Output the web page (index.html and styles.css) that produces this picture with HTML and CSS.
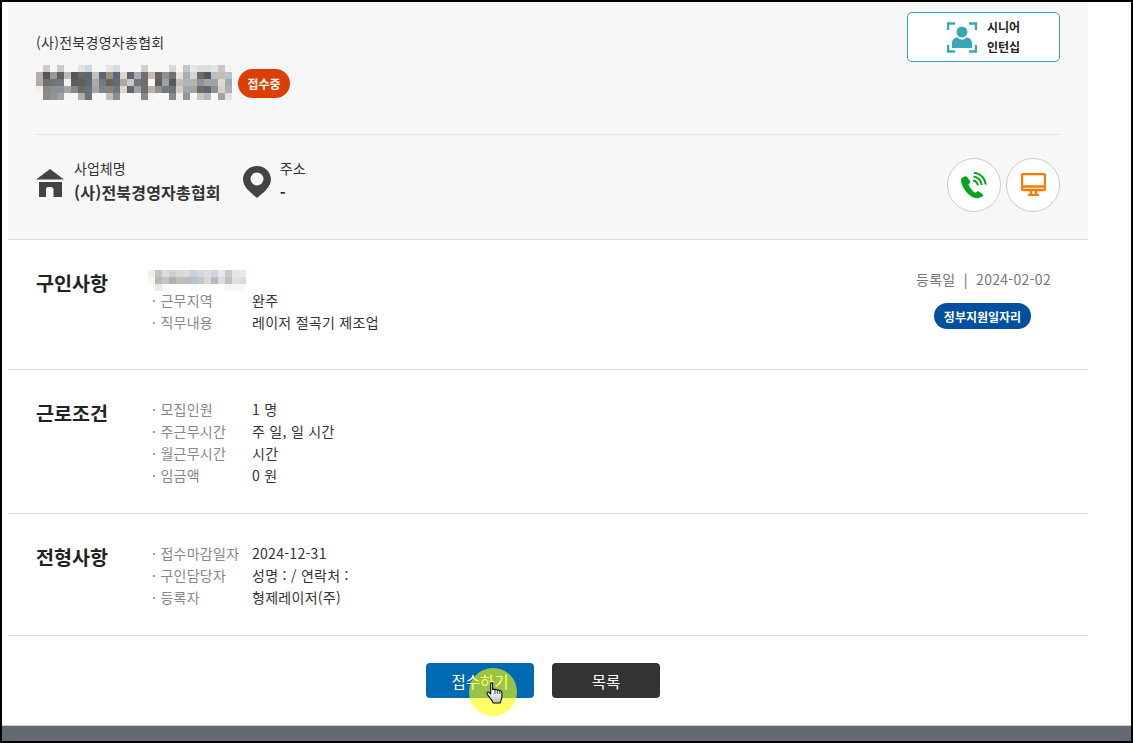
FILE: index.html
```html
<!DOCTYPE html>
<html lang="ko">
<head>
<meta charset="utf-8">
<title>구인 상세</title>
<link rel="stylesheet" href="styles.css">
</head>
<body>
<div class="frame">
  <main class="main">
    <header class="summary">
      <div class="summary-top">
        <div class="org-block">
          <p class="org">(사)전북경영자총협회</p>
          <div class="title-row">
            <svg class="mosaic mosaic-title" viewBox="0 0 196 38" aria-hidden="true">
              <g>
                <rect x="7" y="0" fill="#ccc"/><rect x="21" y="0" fill="#ccc"/><rect x="42" y="0" fill="#e5e5e5"/><rect x="49" y="0" fill="#d4d6d8"/><rect x="70" y="0" fill="#e5e5e5"/><rect x="77" y="0" fill="#d8dadb"/><rect x="105" y="0" fill="#d0d0d0"/><rect x="133" y="0" fill="#d8d8d8"/><rect x="147" y="0" fill="#c4c4c4"/><rect x="154" y="0" fill="#e8e8e8"/><rect x="161" y="0" fill="#ddd"/><rect x="168" y="0" fill="#ddd"/><rect x="175" y="0" fill="#e4e4e8"/><rect x="182" y="0" fill="#c8c8c8"/><rect x="189" y="0" fill="#f2f3f5"/>
                <rect x="0" y="7" fill="#b5aea7"/><rect x="7" y="7" fill="#555"/><rect x="14" y="7" fill="#95979b"/><rect x="21" y="7" fill="#5c6167"/><rect x="28" y="7" fill="#bdb9b3"/><rect x="35" y="7" fill="#55585a"/><rect x="42" y="7" fill="#6b6660"/><rect x="49" y="7" fill="#5b6773"/><rect x="56" y="7" fill="#c4bfba"/><rect x="63" y="7" fill="#5b6976"/><rect x="70" y="7" fill="#9a9085"/><rect x="77" y="7" fill="#5c6873"/><rect x="84" y="7" fill="#dcd6d0"/><rect x="91" y="7" fill="#666"/><rect x="98" y="7" fill="#a5adb5"/><rect x="105" y="7" fill="#6e6e6e"/><rect x="112" y="7" fill="#c5bdb5"/><rect x="119" y="7" fill="#6b655f"/><rect x="126" y="7" fill="#8b929b"/><rect x="133" y="7" fill="#6f7072"/><rect x="140" y="7" fill="#e6e0d8"/><rect x="147" y="7" fill="#a5adb5"/><rect x="154" y="7" fill="#d8d4d0"/><rect x="161" y="7" fill="#6f6a62"/><rect x="168" y="7" fill="#505860"/><rect x="175" y="7" fill="#c0bfbe"/><rect x="182" y="7" fill="#c9bdb2"/><rect x="189" y="7" fill="#b8c2cc"/>
                <rect x="0" y="14" fill="#b5aca4"/><rect x="7" y="14" fill="#70706f"/><rect x="14" y="14" fill="#6f7476"/><rect x="21" y="14" fill="#73787e"/><rect x="28" y="14" fill="#f4f1ec"/><rect x="35" y="14" fill="#5a5e60"/><rect x="42" y="14" fill="#665d52"/><rect x="49" y="14" fill="#5e6a75"/><rect x="56" y="14" fill="#aea9a2"/><rect x="63" y="14" fill="#6d7c88"/><rect x="70" y="14" fill="#6a6054"/><rect x="77" y="14" fill="#606c76"/><rect x="84" y="14" fill="#b0a99f"/><rect x="91" y="14" fill="#c0c8ce"/><rect x="98" y="14" fill="#6f7478"/><rect x="105" y="14" fill="#6e6e6e"/><rect x="112" y="14" fill="#fafafa"/><rect x="119" y="14" fill="#665c52"/><rect x="126" y="14" fill="#9ba2a8"/><rect x="133" y="14" fill="#505a60"/><rect x="140" y="14" fill="#c8bcb2"/><rect x="147" y="14" fill="#a8b4be"/><rect x="154" y="14" fill="#b9b2aa"/><rect x="161" y="14" fill="#8d9298"/><rect x="168" y="14" fill="#a8a29a"/><rect x="175" y="14" fill="#a0a3a5"/><rect x="182" y="14" fill="#e2d8cc"/><rect x="189" y="14" fill="#a0a8b2"/>
                <rect x="0" y="21" fill="#f2f1ef"/><rect x="7" y="21" fill="#8b8781"/><rect x="14" y="21" fill="#8d8e8d"/><rect x="21" y="21" fill="#8a9096"/><rect x="28" y="21" fill="#aaa59f"/><rect x="35" y="21" fill="#84878a"/><rect x="42" y="21" fill="#6b6a64"/><rect x="49" y="21" fill="#66727d"/><rect x="56" y="21" fill="#a9a49d"/><rect x="63" y="21" fill="#7c8286"/><rect x="70" y="21" fill="#85827b"/><rect x="77" y="21" fill="#70767b"/><rect x="84" y="21" fill="#dcd8d0"/><rect x="91" y="21" fill="#666"/><rect x="98" y="21" fill="#9aa3ab"/><rect x="105" y="21" fill="#6e6e6e"/><rect x="112" y="21" fill="#bcb3a8"/><rect x="119" y="21" fill="#8f9498"/><rect x="126" y="21" fill="#6f7a82"/><rect x="133" y="21" fill="#6f7376"/><rect x="140" y="21" fill="#d6ccc2"/><rect x="147" y="21" fill="#a0a8b0"/><rect x="154" y="21" fill="#a8a39c"/><rect x="161" y="21" fill="#6f6c68"/><rect x="168" y="21" fill="#5f6870"/><rect x="175" y="21" fill="#8a9098"/><rect x="182" y="21" fill="#d8cfc6"/><rect x="189" y="21" fill="#a8b0bc"/>
                <rect x="7" y="28" fill="#8d8a85"/><rect x="14" y="28" fill="#939393"/><rect x="21" y="28" fill="#9ea2a5"/><rect x="28" y="28" fill="#f3f3f3"/><rect x="42" y="28" fill="#b5aea6"/><rect x="49" y="28" fill="#66727d"/><rect x="70" y="28" fill="#c4c0b8"/><rect x="77" y="28" fill="#8a9096"/><rect x="105" y="28" fill="#888"/><rect x="112" y="28" fill="#f3f3f3"/><rect x="133" y="28" fill="#888"/><rect x="140" y="28" fill="#f0f0f0"/><rect x="147" y="28" fill="#9298a0"/><rect x="161" y="28" fill="#cfc4bf"/><rect x="168" y="28" fill="#b0b6c4"/><rect x="182" y="28" fill="#a8a098"/><rect x="189" y="28" fill="#dde4ea"/>
              </g>
            </svg>
            <span class="badge badge-open">접수중</span>
          </div>
        </div>
        <a class="senior-btn" href="#">
          <svg class="senior-icon" viewBox="0 0 30 31" aria-hidden="true">
            <path class="bracket" d="M1 8V1.500H8M22 1.500H29V8M1 23V29.500H8M22 29.500H29V23"/>
            <circle class="person" cx="15" cy="10" r="5.500"/>
            <path class="person" d="M5 26V21C5 17.500 8 15.500 10.500 15.500C12 17 13.500 17.500 15 17.500C16.500 17.500 18 17 19.500 15.500C22 15.500 25 17.500 25 21V26Z"/>
          </svg>
          <span class="senior-text">시니어<br>인턴십</span>
        </a>
      </div>
      <div class="summary-bottom">
        <div class="info">
          <svg class="home-icon" viewBox="0 0 28 28" aria-hidden="true">
            <path class="dark-fill" fill-rule="evenodd" d="M14 0L28 10.500H0ZM3 13H26V28H17.500V20.500C17.500 18.500 16 18 13.500 18C11 18 10 18.500 10 20.500V28H3Z"/>
          </svg>
          <div class="info-text">
            <span class="info-label">사업체명</span>
            <strong class="info-value">(사)전북경영자총협회</strong>
          </div>
        </div>
        <div class="info">
          <svg class="pin-icon" viewBox="0 0 28 32" aria-hidden="true">
            <path class="dark-fill" fill-rule="evenodd" d="M14 0C6.300 0 0 6 0 13.500C0 21 8 27 14 32C20 27 28 21 28 13.500C28 6 21.700 0 14 0ZM14 6.500A6.500 6.500 0 1 1 14 19.500A6.500 6.500 0 1 1 14 6.500Z"/>
          </svg>
          <div class="info-text">
            <span class="info-label">주소</span>
            <strong class="info-value">-</strong>
          </div>
        </div>
        <div class="round-btns">
          <a class="round-btn" href="#">
            <svg class="phone-icon" viewBox="0 0 28 27" aria-hidden="true">
              <path class="phone-body" d="M4.500 4.500L1.500 6C0.500 8 1 11 3 15C6 20.500 11 25 15 26C17.500 26.500 20 26 21.500 25L23 24C23.500 23.500 23.500 23 23 22.500L18.800 19.500C18.300 19.200 17.800 19.200 17.300 19.500L15.500 20.800C13 19.500 9.500 15.500 8.500 12.500L10 10.800C10.400 10.300 10.500 9.800 10.200 9.300L7 4.800C6.500 4 5.500 4 4.500 4.500Z"/>
              <path class="phone-wave" d="M13 8.500C15.500 8.800 17.500 10.800 17.800 13.500M13.500 4.500C17.800 5 21.300 8.500 21.800 13M14 0.800C20 1.200 25 6 25.800 12.500"/>
            </svg>
          </a>
          <a class="round-btn" href="#">
            <svg class="monitor-icon" viewBox="0 0 25 23" aria-hidden="true">
              <path class="monitor-line" d="M2.500 1H22.500C23.300 1 24 1.700 24 2.500V15.500C24 16.300 23.300 17 22.500 17H2.500C1.700 17 1 16.300 1 15.500V2.500C1 1.700 1.700 1 2.500 1ZM1 13.500H24M10 17.500V21.500M15 17.500V21.500M7 22H18"/>
            </svg>
          </a>
        </div>
      </div>
    </header>

    <section class="section section-job">
      <h2 class="section-title">구인사항</h2>
      <div class="section-body">
        <svg class="mosaic mosaic-sub" viewBox="0 0 98 21" aria-hidden="true">
          <g>
            <rect x="0" y="0" fill="#f5eee8"/><rect x="7" y="0" fill="#c0c4c8"/><rect x="14" y="0" fill="#dcdcdc"/><rect x="21" y="0" fill="#d0d0d0"/><rect x="28" y="0" fill="#d8d8d8"/><rect x="35" y="0" fill="#e0dcd8"/><rect x="42" y="0" fill="#c8d0dc"/><rect x="49" y="0" fill="#d4d8e0"/><rect x="56" y="0" fill="#e0dcdc"/><rect x="63" y="0" fill="#d4d4e0"/><rect x="70" y="0" fill="#e4e8e8"/><rect x="77" y="0" fill="#c8c8c4"/><rect x="84" y="0" fill="#e8e4e0"/><rect x="91" y="0" fill="#e4e8f0"/>
            <rect x="0" y="7" fill="#f8f4f0"/><rect x="7" y="7" fill="#b8bab8"/><rect x="14" y="7" fill="#c4c4c4"/><rect x="21" y="7" fill="#b0b0b8"/><rect x="28" y="7" fill="#c0c0b8"/><rect x="35" y="7" fill="#c0bcb4"/><rect x="42" y="7" fill="#b8c0d0"/><rect x="49" y="7" fill="#c0c8d4"/><rect x="56" y="7" fill="#dcd8d4"/><rect x="63" y="7" fill="#b8b8c8"/><rect x="70" y="7" fill="#dcdcdc"/><rect x="77" y="7" fill="#c0c0bc"/><rect x="84" y="7" fill="#e4e0dc"/><rect x="91" y="7" fill="#d8dce0"/>
            <rect x="7" y="14" fill="#e8e8e6"/><rect x="14" y="14" fill="#fafafa"/><rect x="42" y="14" fill="#fafafa"/><rect x="77" y="14" fill="#f6f6f4"/><rect x="84" y="14" fill="#f8f6f4"/><rect x="91" y="14" fill="#f6f8fa"/>
          </g>
        </svg>
        <dl class="rows">
          <div class="row"><dt>· 근무지역</dt><dd>완주</dd></div>
          <div class="row"><dt>· 직무내용</dt><dd>레이저 절곡기 제조업</dd></div>
        </dl>
      </div>
      <div class="job-meta">
        <p class="reg-date">등록일 <span class="sep">|</span> 2024-02-02</p>
        <span class="badge badge-gov">정부지원일자리</span>
      </div>
    </section>

    <section class="section section-work">
      <h2 class="section-title">근로조건</h2>
      <div class="section-body">
        <dl class="rows">
          <div class="row"><dt>· 모집인원</dt><dd>1 명</dd></div>
          <div class="row"><dt>· 주근무시간</dt><dd>주 일, 일 시간</dd></div>
          <div class="row"><dt>· 월근무시간</dt><dd>시간</dd></div>
          <div class="row"><dt>· 임금액</dt><dd>0 원</dd></div>
        </dl>
      </div>
    </section>

    <section class="section section-screen">
      <h2 class="section-title">전형사항</h2>
      <div class="section-body">
        <dl class="rows">
          <div class="row"><dt>· 접수마감일자</dt><dd>2024-12-31</dd></div>
          <div class="row"><dt>· 구인담당자</dt><dd>성명 : / 연락처 :</dd></div>
          <div class="row"><dt>· 등록자</dt><dd>형제레이저(주)</dd></div>
        </dl>
      </div>
    </section>

    <div class="actions">
      <a class="btn btn-apply" href="#">접수하기</a>
      <a class="btn btn-list" href="#">목록</a>
    </div>
  </main>
  <div class="footer-bar"></div>

  <div class="cursor-halo"></div>
  <svg class="cursor-hand" viewBox="0 0 18 23" aria-hidden="true">
    <defs>
      <linearGradient id="handShade" x1="0" y1="0" x2="0" y2="1">
        <stop offset="0.4" stop-color="#fff"/>
        <stop offset="1" stop-color="#bbb"/>
      </linearGradient>
    </defs>
    <path fill="url(#handShade)" stroke="#000" stroke-width="1.100" stroke-linejoin="round" d="M5 1.500C5 0.500 7 0.500 7 1.500V8C7.500 7 9.500 7 9.500 8.300C10 7.300 12 7.500 12 8.800C12.500 8 14.500 8.300 14.500 9.500C15 9 16.800 9.300 16.800 10.800V15.500C16.800 18 15.500 19.500 15 22H7.500C7 20 5.500 18.500 4 16.500C3 15 1 13 1 11.800C1 10.500 2.500 10.200 3.500 11L5 12.500Z"/>
    <path fill="none" stroke="#000" stroke-width="0.800" d="M9.500 8.300V12.500M12 8.800V12.500M14.500 9.500V12.500"/>
  </svg>
</div>
</body>
</html>
```

FILE: styles.css
```css
* { box-sizing: border-box; }
html, body { margin: 0; padding: 0; }
body {
  font-family: "Noto Sans CJK KR", "Noto Sans", sans-serif;
  font-size: 14px;
  color: #333;
  background: #fff;
}
a { text-decoration: none; }
p, h2, dl, dd { margin: 0; }

.frame {
  position: relative;
  width: 1133px;
  height: 743px;
  border: 2px solid #000;
  overflow: hidden;
  display: flex;
  flex-direction: column;
}
.main { width: 1080px; margin-left: 6px; }

/* summary */
.summary {
  height: 238px;
  background: #f7f7f7;
  border-bottom: 1px solid #ddd;
  padding: 0 28px;
}
.summary-top {
  height: 133px;
  display: flex;
  justify-content: space-between;
  align-items: flex-start;
  border-bottom: 1px solid #e6e6e6;
}
.org-block { padding-top: 30px; }
.org { font-size: 14px; line-height: 20px; color: #333; letter-spacing: 0.28px; }
.title-row { display: flex; align-items: center; gap: 8px; margin-top: 13px; }
.mosaic { display: block; }
.mosaic rect { width: 7px; height: 7px; }
.mosaic-title { width: 196px; height: 38px; shape-rendering: crispEdges; margin-right: -2px; }
.mosaic-sub { width: 98px; height: 21px; shape-rendering: crispEdges; margin-left: -4px; margin-bottom: -2px; }

.badge {
  display: inline-flex;
  align-items: center;
  justify-content: center;
  color: #fff;
  font-size: 12px;
  font-weight: 700;
}
.badge-open { width: 52px; height: 29px; border-radius: 15px; background: #dc3d00; margin-top: -1px; }
.badge-gov { width: 97px; height: 26px; border-radius: 13px; background: #00509f; }

.senior-btn {
  margin-top: 10px;
  width: 153px;
  height: 50px;
  background: #fff;
  border: 1px solid #2fa3b1;
  border-radius: 5px;
  display: flex;
  align-items: center;
  gap: 10px;
  padding-left: 39px;
}
.senior-icon { width: 30px; height: 31px; flex: none; }
.bracket { fill: none; stroke: #3aa6b5; stroke-width: 2.500; }
.person { fill: #3aa6b5; }
.senior-text { font-size: 12px; font-weight: 700; line-height: 20px; color: #222; }

.summary-bottom {
  display: flex;
  align-items: flex-start;
  gap: 22px;
  padding-top: 23px;
}
.info { display: flex; align-items: center; gap: 10px; }
.info-text { display: flex; flex-direction: column; }
.info-label { font-size: 14px; line-height: 22px; color: #333; margin-top: -1px; margin-bottom: 1px; }
.info-value { font-size: 16px; line-height: 24px; font-weight: 700; color: #333; letter-spacing: 0.2px; }
.home-icon { width: 28px; height: 28px; flex: none; margin-top: 4px; }
.pin-icon { width: 28px; height: 32px; flex: none; margin-top: 2px; margin-right: -1px; }
.dark-fill { fill: #444; }

.round-btns { margin-left: auto; display: flex; gap: 5px; }
.round-btn {
  width: 54px;
  height: 54px;
  border-radius: 50%;
  background: #fff;
  border: 1px solid #ccc;
  display: flex;
  align-items: center;
  justify-content: center;
}
.phone-icon { width: 28px; height: 27px; }
.phone-body { fill: #0aa51e; }
.phone-wave { fill: none; stroke: #0aa51e; stroke-width: 2; }
.monitor-icon { width: 25px; height: 23px; margin-top: -2px; }
.monitor-line { fill: none; stroke: #f57c00; stroke-width: 2.400; }

/* sections */
.section {
  display: flex;
  align-items: flex-start;
  border-bottom: 1px solid #ddd;
  padding-left: 28px;
  padding-right: 37px;
}
.section-job { height: 130px; padding-top: 28px; }
.section-work { height: 144px; padding-top: 28px; }
.section-screen { height: 122px; padding-top: 28px; }
.section-title {
  width: 116px;
  flex: none;
  font-size: 19.600px;
  line-height: 30px;
  font-weight: 700;
  color: #222;
}
.section-body { flex: 1; }
.rows { display: flex; flex-direction: column; }
.row { display: flex; line-height: 22px; font-size: 14px; letter-spacing: 0.28px; }
.row dt { width: 100px; flex: none; color: #888; }
.row dd { color: #333; }
.section-job .section-body { padding-top: 2px; }

.job-meta {
  width: 135px;
  margin-top: -1px;
  display: flex;
  flex-direction: column;
  align-items: center;
}
.reg-date { font-size: 14px; line-height: 24px; color: #777; white-space: nowrap; letter-spacing: 0.3px; }
.sep { margin: 0 4px; color: #666; }
.job-meta .badge-gov { margin-top: 12px; margin-right: 2px; }

/* actions */
.actions {
  display: flex;
  justify-content: center;
  gap: 18px;
  padding-top: 27px;
  padding-right: 10px;
}
.btn {
  width: 108px;
  height: 35px;
  border-radius: 4px;
  color: #fff;
  font-size: 15.500px;
  display: flex;
  align-items: center;
  justify-content: center;
}
.btn-apply { background: #0069b4; }
.btn-list { background: #333; }

.footer-bar {
  margin-top: auto;
  height: 16px;
  background: #636a72;
  border-top: 1px solid #ccc;
}

/* screen-recording cursor overlay */
.cursor-halo {
  position: absolute;
  left: 467px;
  top: 666px;
  width: 48px;
  height: 48px;
  border-radius: 50%;
  background: rgba(255, 255, 0, 0.6);
}
.cursor-hand {
  position: absolute;
  left: 484px;
  top: 680px;
  width: 17px;
  height: 22px;
}
```
